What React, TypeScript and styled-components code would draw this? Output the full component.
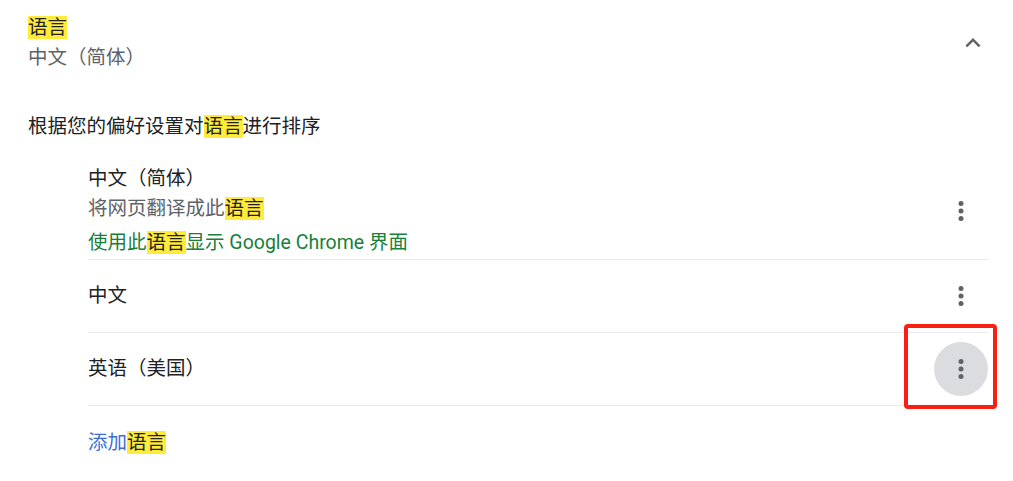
import styled, { createGlobalStyle } from 'styled-components'

const GlobalStyle = createGlobalStyle`
  html, body {
    margin: 0;
    padding: 0;
    background: #ffffff;
  }
  body {
    font-family: Roboto, "Noto Sans CJK SC", sans-serif;
    font-size: 19.5px;
    line-height: 30px;
    color: #202124;
  }
`

const Page = styled.div`
  width: 1013px;
  height: 481px;
  box-sizing: border-box;
  padding: 13px 25px 0 28px;
  overflow: hidden;
`

const Header = styled.div`
  display: flex;
  align-items: center;
  justify-content: space-between;
`

const HeaderText = styled.div`
  display: flex;
  flex-direction: column;
`

const Title = styled.div`
  color: #202124;
`

const SubTitle = styled.div`
  color: #5f6368;
`

const Mark = styled.span`
  background-color: #ffeb3b;
  color: #202124;
`

const Description = styled.div`
  margin-top: 39px;
`

const List = styled.div`
  margin: 21px 0 0 60px;
  display: flex;
  flex-direction: column;
`

const Row = styled.div<{ $first?: boolean; $last?: boolean }>`
  display: flex;
  align-items: center;
  justify-content: space-between;
  min-height: ${p => (p.$first ? '96px' : '72px')};
  border-top: ${p => (p.$first ? 'none' : '1px solid #e8eaed')};
  border-bottom: ${p => (p.$last ? '1px solid #e8eaed' : 'none')};
`

const RowText = styled.div`
  display: flex;
  flex-direction: column;
`

const Secondary = styled.div`
  color: #5f6368;
`

const UiNote = styled.div`
  margin-top: 4px;
  color: #188038;
`

const IconButton = styled.button<{ $active?: boolean }>`
  position: relative;
  width: 54px;
  height: 54px;
  padding: 0;
  border: none;
  border-radius: 50%;
  display: flex;
  align-items: center;
  justify-content: center;
  background: ${p => (p.$active ? '#dadce0' : 'transparent')};
  cursor: pointer;
`

const Callout = styled.span`
  position: absolute;
  left: -30px;
  right: -9px;
  top: -18px;
  bottom: -13px;
  border: 4px solid #fa1e13;
  border-radius: 4px;
  pointer-events: none;
`

const Chevron = styled.svg`
  width: 30px;
  height: 30px;
  display: block;
`

const AddLink = styled.a`
  display: inline-block;
  margin: 22px 0 0 60px;
  color: #3b6fd8;
  text-decoration: none;
`

function MoreVert() {
  return (
    <svg width="30" height="30" viewBox="0 0 24 24" fill="#5f6368">
      <circle cx="12" cy="6" r="2" />
      <circle cx="12" cy="12" r="2" />
      <circle cx="12" cy="18" r="2" />
    </svg>
  )
}

export default function App() {
  return (
    <>
      <GlobalStyle />
      <Page>
        <Header>
          <HeaderText>
            <Title>
              <Mark>语言</Mark>
            </Title>
            <SubTitle>中文（简体）</SubTitle>
          </HeaderText>
          <Chevron viewBox="0 0 24 24" fill="#5f6368">
            <path d="M12 8l-6 6 1.41 1.41L12 10.83l4.59 4.58L18 14z" />
          </Chevron>
        </Header>
        <Description>
          根据您的偏好设置对<Mark>语言</Mark>进行排序
        </Description>
        <List>
          <Row $first>
            <RowText>
              <div>中文（简体）</div>
              <Secondary>
                将网页翻译成此<Mark>语言</Mark>
              </Secondary>
              <UiNote>
                使用此<Mark>语言</Mark>显示 Google Chrome 界面
              </UiNote>
            </RowText>
            <IconButton aria-label="更多操作">
              <MoreVert />
            </IconButton>
          </Row>
          <Row>
            <RowText>中文</RowText>
            <IconButton aria-label="更多操作">
              <MoreVert />
            </IconButton>
          </Row>
          <Row $last>
            <RowText>英语（美国）</RowText>
            <IconButton $active aria-label="更多操作">
              <MoreVert />
              <Callout />
            </IconButton>
          </Row>
        </List>
        <AddLink href="#">
          添加<Mark>语言</Mark>
        </AddLink>
      </Page>
    </>
  )
}
